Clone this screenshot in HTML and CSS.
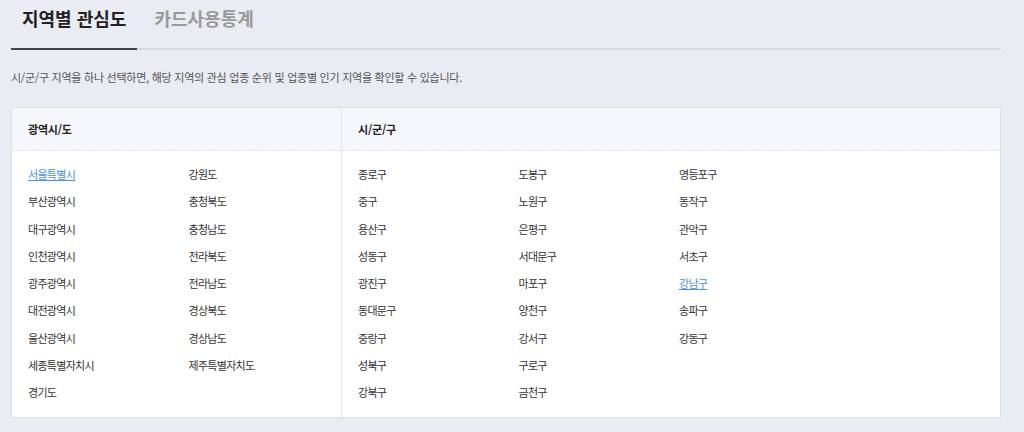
FILE: index.html
```html
<!DOCTYPE html>
<html lang="ko">

<head>
    <meta charset="UTF-8">
    <meta name="viewport" content="width=device-width, initial-scale=1.0">
    <title>지역별 관심도</title>
    <link rel="stylesheet" href="styles.css">
</head>

<body>
    <div class="wrap">
        <ul class="tabs">
            <li class="on">지역별 관심도</li>
            <li>카드사용통계</li>
        </ul>
        <p class="desc">시/군/구 지역을 하나 선택하면, 해당 지역의 관심 업종 순위 및 업종별 인기 지역을 확인할 수 있습니다.</p>

        <div class="area-box">
            <div class="col col-sido">
                <h3>광역시/도</h3>
                <ul class="list">
                    <li><a href="javascript:;" class="on">서울특별시</a></li>
                    <li><a href="javascript:;">부산광역시</a></li>
                    <li><a href="javascript:;">대구광역시</a></li>
                    <li><a href="javascript:;">인천광역시</a></li>
                    <li><a href="javascript:;">광주광역시</a></li>
                    <li><a href="javascript:;">대전광역시</a></li>
                    <li><a href="javascript:;">울산광역시</a></li>
                    <li><a href="javascript:;">세종특별자치시</a></li>
                    <li><a href="javascript:;">경기도</a></li>
                    <li><a href="javascript:;">강원도</a></li>
                    <li><a href="javascript:;">충청북도</a></li>
                    <li><a href="javascript:;">충청남도</a></li>
                    <li><a href="javascript:;">전라북도</a></li>
                    <li><a href="javascript:;">전라남도</a></li>
                    <li><a href="javascript:;">경상북도</a></li>
                    <li><a href="javascript:;">경상남도</a></li>
                    <li><a href="javascript:;">제주특별자치도</a></li>
                </ul>
            </div>
            <div class="col col-sgg">
                <h3>시/군/구</h3>
                <ul class="list">
                    <li><a href="javascript:;">종로구</a></li>
                    <li><a href="javascript:;">중구</a></li>
                    <li><a href="javascript:;">용산구</a></li>
                    <li><a href="javascript:;">성동구</a></li>
                    <li><a href="javascript:;">광진구</a></li>
                    <li><a href="javascript:;">동대문구</a></li>
                    <li><a href="javascript:;">중랑구</a></li>
                    <li><a href="javascript:;">성북구</a></li>
                    <li><a href="javascript:;">강북구</a></li>
                    <li><a href="javascript:;">도봉구</a></li>
                    <li><a href="javascript:;">노원구</a></li>
                    <li><a href="javascript:;">은평구</a></li>
                    <li><a href="javascript:;">서대문구</a></li>
                    <li><a href="javascript:;">마포구</a></li>
                    <li><a href="javascript:;">양천구</a></li>
                    <li><a href="javascript:;">강서구</a></li>
                    <li><a href="javascript:;">구로구</a></li>
                    <li><a href="javascript:;">금천구</a></li>
                    <li><a href="javascript:;">영등포구</a></li>
                    <li><a href="javascript:;">동작구</a></li>
                    <li><a href="javascript:;">관악구</a></li>
                    <li><a href="javascript:;">서초구</a></li>
                    <li><a href="javascript:;" class="on">강남구</a></li>
                    <li><a href="javascript:;">송파구</a></li>
                    <li><a href="javascript:;">강동구</a></li>
                </ul>
            </div>
        </div>
    </div>
</body>

</html>
```

FILE: styles.css
```css
html,
body {
    margin: 0;
    padding: 0;
    background-color: #e9ecf3;
    font-family: "Noto Sans CJK KR", "Noto Sans", sans-serif;
    color: #333;
}

ul {
    margin: 0;
    padding: 0;
}

li {
    list-style: none;
}

a {
    color: #333;
    text-decoration: none;
}

.wrap {
    width: 990px;
    margin-left: 11px;
}

/* 탭 */
.tabs {
    display: flex;
    border-bottom: 2px solid #d6d8dd;
}

.tabs li {
    padding: 0 11px 12px;
    margin-bottom: -2px;
    line-height: 36px;
    font-size: 18px;
    font-weight: bold;
    letter-spacing: 0;
    color: #999;
    border-bottom: 2px solid transparent;
}

.tabs li+li {
    margin-left: 6px;
}

.tabs li.on {
    color: #222;
    border-bottom-color: #444;
}

.desc {
    margin: 18px 0 21px;
    line-height: 18px;
    font-size: 11px;
    letter-spacing: -0.25px;
    color: #555;
}

/* 지역 선택 */
.area-box {
    display: flex;
    background-color: #fff;
    border: 1px solid #dcdfe6;
}

.col-sido {
    width: 329px;
}

.col-sgg {
    flex: 1;
    border-left: 1px solid #e3e5ea;
}

.col h3 {
    margin: 0;
    padding-left: 16px;
    height: 42px;
    line-height: 42px;
    font-size: 11px;
    letter-spacing: -0.2px;
    background-color: #f6f7fb;
    border-bottom: 1px dashed #e0e3ec;
    color: #222;
}

.list {
    display: grid;
    grid-template-rows: repeat(9, 27.25px);
    grid-auto-flow: column;
    grid-auto-columns: 160.5px;
    padding: 10px 0 11px 16px;
}

.col-sgg .list {
    grid-auto-columns: 160.5px;
}

.list li {
    line-height: 27.25px;
    font-size: 11px;
    letter-spacing: -0.7px;
}

.list a.on {
    color: #4a90e2;
    text-decoration: underline;
}
```
